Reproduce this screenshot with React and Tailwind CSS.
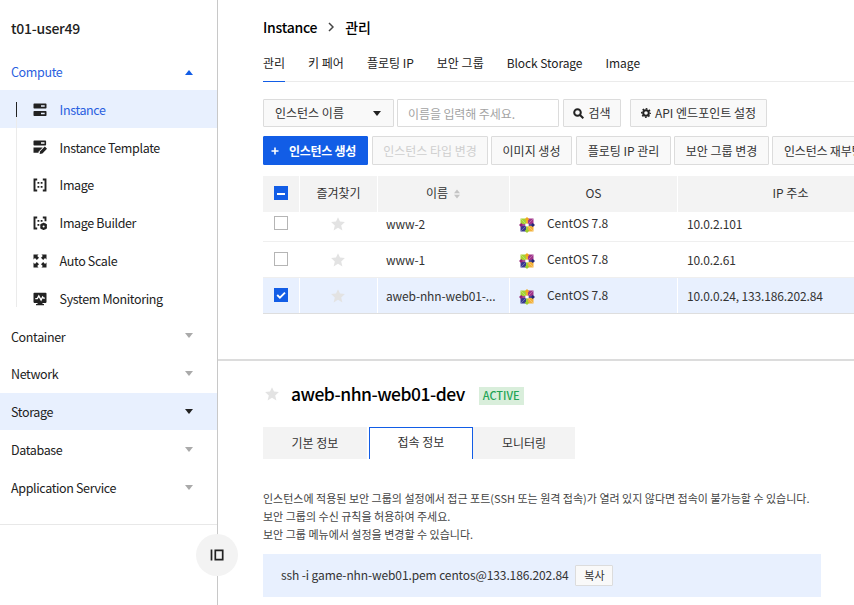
import React from "react";

const menus = [
  { label: "Instance", icon: "server", active: true },
  { label: "Instance Template", icon: "template" },
  { label: "Image", icon: "image" },
  { label: "Image Builder", icon: "builder" },
  { label: "Auto Scale", icon: "scale" },
  { label: "System Monitoring", icon: "monitor" },
];

const categories = [
  { label: "Container" },
  { label: "Network" },
  { label: "Storage", active: true },
  { label: "Database" },
  { label: "Application Service" },
];

const rows = [
  { name: "www-2", ip: "10.0.2.101" },
  { name: "www-1", ip: "10.0.2.61" },
  { name: "aweb-nhn-web01-...", ip: "10.0.0.24, 133.186.202.84", checked: true },
];

const icons = {
  server: (
    <>
      <path fillRule="evenodd" d="M1.3.5h11.4a.8.8 0 0 1 .8.8v3.5a.8.8 0 0 1-.8.8H1.3a.8.8 0 0 1-.8-.8V1.3a.8.8 0 0 1 .8-.8zM8 2.2v1.6h3.7V2.2z" />
      <path fillRule="evenodd" d="M1.3 8h11.4a.8.8 0 0 1 .8.8v3.5a.8.8 0 0 1-.8.8H1.3a.8.8 0 0 1-.8-.8V8.8a.8.8 0 0 1 .8-.8zM8 9.7v1.6h3.7V9.7z" />
    </>
  ),
  template: (
    <>
      <path fillRule="evenodd" d="M1.300.5h11a.8.8 0 0 1 .8.8v3.400a.8.8 0 0 1-.8.8h-11a.8.8 0 0 1-.8-.8V1.300a.8.8 0 0 1 .8-.8zM8 2.200v1.500h3.500V2.200z" />
      <path d="M.5 7.500H9.700L5.500 11.700v1H.5z" />
      <path d="M7.200 11.200l4.600-4.600 2.200 2.200-4.600 4.600-2.800.6z" />
    </>
  ),
  image: (
    <>
      <path d="M4.2 1.5H1.5v11h2.7M9.8 1.5h2.7v11H9.8" fill="none" stroke="currentColor" strokeWidth="1.9" />
      <path d="M4.5 4h1.8v1.8H4.5zM7.7 4h1.8v1.8H7.7zM4.5 8h1.8v1.8H4.5zM7.7 8h1.8v1.8H7.7z" />
    </>
  ),
  builder: (
    <>
      <path d="M4.2 1.5H1.5v11h2.7M9.8 1.5h2.7v3.8" fill="none" stroke="currentColor" strokeWidth="1.9" />
      <path d="M4.5 4h1.8v1.8H4.5zM7.7 4h1.8v1.8H7.7zM4.5 8h1.8v1.8H4.5z" />
      <circle cx="10.6" cy="10.4" r="2.2" fill="none" stroke="currentColor" strokeWidth="2.2" />
      <path d="M10.6 6.8v7.2M7.5 8.6l6.2 3.6M13.7 8.6l-6.2 3.6" stroke="currentColor" strokeWidth="1.3" />
      <circle cx="10.6" cy="10.4" r="1" fill="#fff" />
    </>
  ),
  scale: (
    <>
      <path d="M.5.5h5L4.2 1.9l1.8 1.8-2.200 2.200-1.800-1.800L.5 5.500z" />
      <path d="M13.500.5h-5l1.300 1.400-1.800 1.800 2.200 2.200 1.800-1.800 1.500 1.400z" />
      <path d="M.5 13.500h5l-1.300-1.400 1.800-1.800-2.200-2.200-1.800 1.800L.5 8.500z" />
      <path d="M13.500 13.500h-5l1.300-1.400-1.800-1.800 2.200-2.200 1.800 1.800 1.500-1.400z" />
    </>
  ),
  monitor: (
    <>
      <path d="M1.300.7h11.400a.8.8 0 0 1 .8.8v8.600a.8.8 0 0 1-.8.8H9.500v1H11v1.400H3v-1.400h1.500v-1H1.300a.8.8 0 0 1-.8-.8V1.500a.8.8 0 0 1 .8-.8z" />
      <path d="M2.300 6.600h2l1.500-2.700 2.300 4.200L9.600 5l1 1.200h1.300" fill="none" stroke="#fff" strokeWidth="1.300" />
    </>
  ),
};

const Star = ({ className }) => (
  <svg viewBox="0 0 14 14" className={`size-3.5 fill-[#e3e3e3] ${className || ""}`}>
    <path d="M7 .2l2 4.4 4.9.5-3.7 3.3 1.2 5L7 10.8l-4.4 2.6 1.2-5L.1 5.1 5 4.600z" />
  </svg>
);

const Caret = ({ up, className }) => (
  <svg viewBox="0 0 8 5" className={`h-[5px] w-2 ${up ? "rotate-180" : ""} ${className}`}>
    <path d="M0 0h8L4 5z" fill="currentColor" />
  </svg>
);

const CentOS = () => (
  <svg viewBox="0 0 16 16" className="size-4">
    <path fill="#a4d233" d="M1.5 1.5h5.700v5.700H1.500z" />
    <path fill="#a0348b" d="M8.800 1.500h5.700v5.700H8.800z" />
    <path fill="#3a3990" d="M1.500 8.800h5.700v5.700H1.500z" />
    <path fill="#f3b13a" d="M8.800 8.800h5.700v5.700H8.800z" />
    <path d="M2 2l12 12M14 2L2 14" stroke="#fff" strokeWidth=".5" opacity=".55" />
    <path fill="#f0a81c" d="M8 0l2.200 2.200L8.900 3.600V6.500H7.100V3.600L5.800 2.200z" />
    <path fill="#262577" d="M16 8l-2.200 2-1.400-1.200H9.500V7.200h2.900L13.800 6z" />
    <path fill="#9ccd2a" d="M8 16l-2.200-2.200 1.300-1.400V9.500h1.800v2.900l1.300 1.400z" />
    <path fill="#932279" d="M0 8l2.200-2 1.400 1.200h2.900v1.600H3.600L2.200 10z" />
    <path fill="#fff" d="M6.500 7h3v2h-3z" />
  </svg>
);

const Checkbox = ({ checked, partial }) => (
  <span
    className={`flex size-3.5 items-center justify-center ${
      checked || partial ? "bg-[#125de6]" : "border border-[#b5b5b5] bg-white"
    }`}
  >
    {checked && (
      <svg viewBox="0 0 14 14" className="size-3.5">
        <path d="M3.2 7l2.7 2.7L11 4.6" fill="none" stroke="#fff" strokeWidth="1.8" />
      </svg>
    )}
    {partial && <span className="mt-px h-0.5 w-2 bg-white"></span>}
  </span>
);

const Button = ({ className, children }) => (
  <button
    className={`flex shrink-0 items-center justify-center rounded-[1px] border border-[#dcdcdc] bg-[#f9f9f9] whitespace-nowrap ${className}`}
  >
    {children}
  </button>
);

const Sidebar = () => (
  <aside className="relative flex w-[218px] shrink-0 flex-col border-r border-[#c8c8c8] text-[12.5px] tracking-[-0.36px] text-[#222]">
    <div className="flex h-[52px] items-center pt-1 pl-[11px] text-[14px] font-medium tracking-[-0.25px]">t01-user49</div>

    <div className="flex h-[38.3px] items-center justify-between pt-0.5 pr-6 pl-[11px] text-[#2a5fe0]">
      Compute
      <Caret up className="text-[#125de6]" />
    </div>

    <nav className="relative">
      {menus.map((m) => (
        <div
          key={m.label}
          className={`flex h-[37.8px] items-center pt-0.5 pl-[33px] ${m.active ? "bg-[#e8f0fe] text-[#2a5fe0]" : ""}`}
        >
          <svg viewBox="0 0 14 14" className="-mt-px mr-[12.6px] size-3.5 fill-current text-[#222]">
            {icons[m.icon]}
          </svg>
          {m.label}
        </div>
      ))}
      <span className="absolute top-3 bottom-2.5 left-4 w-px bg-[#ebebeb]"></span>
      <span className="absolute top-3 left-4 h-[15px] w-px bg-[#222]"></span>
    </nav>

    <div className="border-b border-[#e8e8e8] pb-[18px]">
      {categories.map((c) => (
        <div
          key={c.label}
          className={`flex h-[37.8px] items-center justify-between pt-0.5 pr-6 pl-[11px] ${c.active ? "bg-[#e8f0fe]" : ""}`}
        >
          {c.label}
          <Caret className={`-mt-0.5 ${c.active ? "text-[#222]" : "text-[#aaa]"}`} />
        </div>
      ))}
    </div>

    <button className="absolute top-[534px] -right-[21px] flex size-[42px] items-center justify-center rounded-full bg-[#f3f3f3]">
      <svg viewBox="0 0 14 12" className="h-3 w-3.5" fill="none" stroke="#222" strokeWidth="1.7">
        <path d="M1.5 .5v11M5.3 1.3h7.4v9.400H5.300z" />
      </svg>
    </button>
  </aside>
);

const InstanceTable = () => (
  <div className="mt-[11px] w-[640px] text-[12px]">
    <div className="relative z-10 grid h-9 grid-cols-[36px_77px_131px_167px_225px] gap-px bg-white text-[#333] *:flex *:items-center *:justify-center *:bg-[#f3f3f3]">
      <div className="pb-0.5">
        <Checkbox partial />
      </div>
      <div className="pb-0.5">즐겨찾기</div>
      <div className="pr-px pb-0.5">
        이름
        <svg viewBox="0 0 6 10" className="mt-0.5 ml-1.5 h-2.5 w-1.5 fill-[#c4c4c4]">
          <path d="M0 4.3L3 .5l3 3.8zM0 5.7h6L3 9.5z" />
        </svg>
      </div>
      <div className="pb-0.5">OS</div>
      <div className="pb-0.5">IP 주소</div>
    </div>
    <div className="-mt-[6px]">
      {rows.map((r) => (
        <div
          key={r.name}
          className={`grid h-9 grid-cols-[36px_77px_131px_167px_225px] gap-px border-b *:flex *:items-center ${
            r.checked ? "border-[#dedede] *:bg-[#e8f0fe]" : "border-[#efefef]"
          }`}
        >
          <div className="justify-center pb-0.5">
            <Checkbox checked={r.checked} />
          </div>
          <div className="justify-center pr-0.5">
            <Star />
          </div>
          <div className="pl-2 tracking-[-0.14px]">{r.name}</div>
          <div className="pl-[9px] tracking-[-0.05px]">
            <span className="mt-0.5">
              <CentOS />
            </span>
            <span className="ml-3 pb-0.5">CentOS 7.8</span>
          </div>
          <div className="pl-[9px] tracking-[-0.14px]">{r.ip}</div>
        </div>
      ))}
    </div>
  </div>
);

const InstanceDetail = () => (
  <section className="border-t-2 border-[#dcdcdc] pl-[45px]">
    <div className="flex h-[66px] items-center">
      <Star className="ml-0.5" />
      <h2 className="ml-3 text-[17.5px] font-medium tracking-[-0.5px] text-black">aweb-nhn-web01-dev</h2>
      <span className="mt-[3px] ml-3.5 flex h-[18px] w-[45px] items-center justify-center bg-[#d9eedb] text-[11px] font-medium text-[#23a455]">
        ACTIVE
      </span>
    </div>
    <div className="flex h-8 text-[12px] *:flex *:items-center *:justify-center">
      <div className="w-[104px] bg-[#f3f3f3] pb-px">기본 정보</div>
      <div className="ml-0.5 w-[104px] border border-b-0 border-[#125de6] pb-[3px]">접속 정보</div>
      <div className="w-[102px] bg-[#f3f3f3] pb-px">모니터링</div>
    </div>
    <p className="mt-[30px] text-[11px] leading-[18px] whitespace-nowrap text-[#444]">
      인스턴스에 적용된 보안 그룹의 설정에서 접근 포트(SSH 또는 원격 접속)가 열려 있지 않다면 접속이 불가능할 수 있습니다.
      <br />
      보안 그룹의 수신 규칙을 허용하여 주세요.
      <br />
      보안 그룹 메뉴에서 설정을 변경할 수 있습니다.
    </p>
    <div className="mt-[11px] flex h-[43px] w-[558px] items-center bg-[#e8f0fe] pl-[18px] text-[12px]">
      <span className="pb-px tracking-[-0.11px]">ssh -i game-nhn-web01.pem centos@133.186.202.84</span>
      <Button className="ml-[7px] h-[21px] w-[38px] text-[11px]">복사</Button>
    </div>
  </section>
);

const App = () => {
  return (
    <div className="flex h-[605px] w-[854px] overflow-hidden bg-white font-['Noto_Sans_CJK_KR',sans-serif] text-[#333]">
      <Sidebar />

      <main className="w-[636px] overflow-hidden">
        <div className="h-[359px] overflow-hidden pl-[45px]">
          <div className="flex h-[46px] items-center pt-2 text-[14px] font-medium tracking-[-0.25px] text-black">
            Instance
            <svg viewBox="0 0 6 10" className="mx-[11px] h-2.5 w-1.5" fill="none" stroke="#444" strokeWidth="1.5">
              <path d="M1 1l4 4-4 4" />
            </svg>
            관리
          </div>

          <div className="flex h-9 gap-[23px] border-b border-[#ebebeb] text-[12px] whitespace-nowrap text-[#222] *:flex *:items-center *:pb-0.5">
            <div className="-mb-px border-b border-[#125de6]">관리</div>
            <div>키 페어</div>
            <div>플로팅 IP</div>
            <div>보안 그룹</div>
            <div className="tracking-[-0.08px]">Block Storage</div>
            <div>Image</div>
          </div>

          <div className="mt-[17px] flex h-7 text-[12px]">
            <Button className="w-[131px] justify-between! pr-3 pl-[11px]">
              인스턴스 이름
              <Caret className="text-[#222]" />
            </Button>
            <div className="ml-[3px] flex w-[162px] items-center rounded-[1px] border border-[#dcdcdc] pt-px pl-2.5 tracking-[-0.1px] text-[#a3a3a3]">
              이름을 입력해 주세요.
            </div>
            <Button className="ml-1 w-[58px]">
              <svg viewBox="0 0 11 11" className="mr-1 size-[11px]" fill="none" stroke="#222" strokeWidth="2">
                <circle cx="4.5" cy="4.5" r="3.3" />
                <path d="M7 7l3.3 3.3" />
              </svg>
              검색
            </Button>
            <Button className="ml-[9px] w-[137px]">
              <svg viewBox="0 0 10 10" className="mr-1 size-2.5" fill="none" stroke="#222">
                <circle cx="5" cy="5" r="2.8" strokeWidth="2" />
                <circle cx="5" cy="5" r="4.3" strokeWidth="1.4" strokeDasharray="1.69 1.69" strokeDashoffset=".84" />
              </svg>
              API 엔드포인트 설정
            </Button>
          </div>

          <div className="mt-[9px] flex h-[29px] text-[12px]">
            <Button className="w-[105px] border-[#125de6]! bg-[#125de6]! pt-px pr-1 font-bold tracking-[-0.3px] text-white">
              <svg viewBox="0 0 8 8" className="mr-2.5 size-2" stroke="#fff" strokeWidth="1.6">
                <path d="M4 .5v7M.5 4h7" />
              </svg>
              인스턴스 생성
            </Button>
            <Button className="ml-1 w-[116px] pt-px text-[#cfcfcf]">인스턴스 타입 변경</Button>
            <Button className="ml-[3px] w-[81px] pt-px">이미지 생성</Button>
            <Button className="ml-1 w-[95px] pt-px">플로팅 IP 관리</Button>
            <Button className="ml-[3px] w-[95px] pt-px">보안 그룹 변경</Button>
            <Button className="ml-[3px] w-[105px] justify-start! pt-px pl-[11px] tracking-[-0.2px]">인스턴스 재부팅</Button>
          </div>

          <InstanceTable />
        </div>

        <InstanceDetail />
      </main>
    </div>
  );
};

export default App;
